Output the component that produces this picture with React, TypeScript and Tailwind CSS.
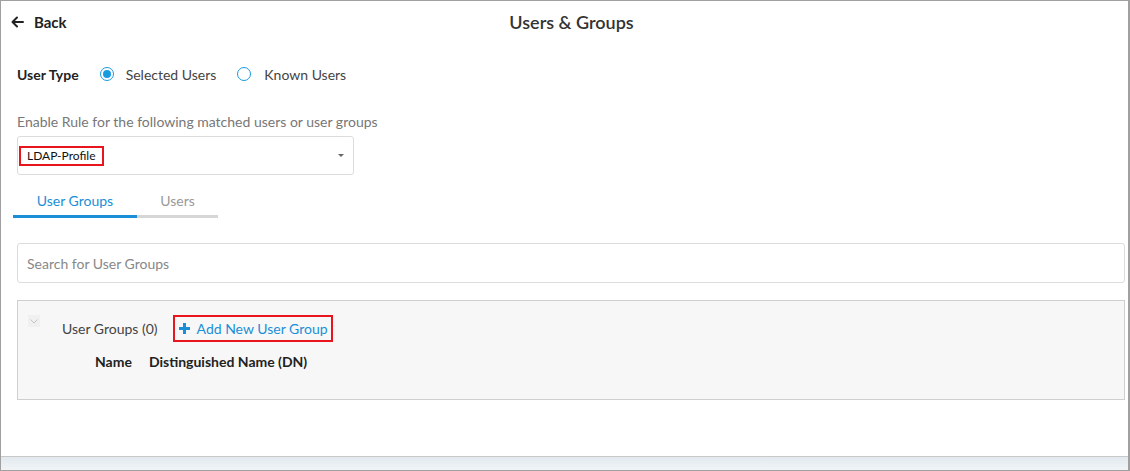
export default function App() {
  return (
    <div
      className="w-[1130px] h-[471px] bg-white border border-[#a0a0a0] border-r-2 flex flex-col text-[#333] overflow-hidden"
      style={{ fontFamily: 'Lato, "Open Sans", sans-serif' }}
    >
      {/* Header */}
      <div className="relative h-[42px] flex items-center">
        <button className="flex items-center gap-[10px] pl-[10px] text-[15px] font-bold text-[#222]">
          <svg width="13" height="12" viewBox="0 0 13 12" fill="none" stroke="#222" strokeWidth="2" strokeLinecap="round" strokeLinejoin="round">
            <path d="M12 6H2M6 1.5L1.5 6L6 10.5" />
          </svg>
          Back
        </button>
        <h1 className="absolute left-0 right-0 pl-[14px] text-center text-[18px] font-semibold text-[#333] pointer-events-none">
          Users &amp; Groups
        </h1>
      </div>

      <div className="flex-1 pl-4 pr-[3px]">
        {/* User Type */}
        <div className="flex items-center h-[20px] mt-[21px] text-[14px]">
          <span className="font-bold text-[14px] text-[#222] mr-[21px]">User Type</span>
          <label className="flex items-center">
            <span className="w-[14px] h-[14px] rounded-full border border-[#1a9be0] flex items-center justify-center">
              <span className="w-[8px] h-[8px] rounded-full bg-[#1a9be0]" />
            </span>
            <span className="ml-[12px] text-[#444]">Selected Users</span>
          </label>
          <label className="flex items-center ml-[21px]">
            <span className="w-[14px] h-[14px] rounded-full border border-[#1a9be0]" />
            <span className="ml-[13px] text-[#444]">Known Users</span>
          </label>
        </div>

        {/* Rule select */}
        <p className="mt-[29px] text-[14px] text-[#777] leading-[18px]">
          Enable Rule for the following matched users or user groups
        </p>
        <div className="mt-[5px] w-[337px] h-[39px] border border-[#dcdcdc] rounded-[3px] flex items-center justify-between pr-[9px]">
          <span className="ml-[1px] border-2 border-[#e8141e] h-[20px] px-[6px] flex items-center text-[12px] text-[#111]">
            LDAP-Profile
          </span>
          <span className="w-0 h-0 border-l-[3px] border-r-[3px] border-t-[3px] border-l-transparent border-r-transparent border-t-[#666]" />
        </div>

        {/* Tabs */}
        <div className="flex mt-[10px] -ml-[4px] text-[14px]">
          <div className="w-[124px] h-[33px] flex items-center justify-center text-[#1a8fd8] border-b-[3px] border-[#1a8fd8]">
            User Groups
          </div>
          <div className="w-[81px] h-[33px] flex items-center justify-center text-[#999] border-b-[3px] border-[#d6d6d6]">
            Users
          </div>
        </div>

        {/* Search */}
        <div className="mt-[25px] h-[40px] border border-[#dcdcdc] rounded-[3px] flex items-center px-[9px] text-[14px] text-[#888]">
          Search for User Groups
        </div>

        {/* Panel */}
        <div className="mt-[17px] h-[100px] border border-[#cfcfcf] bg-[#f7f7f7]">
          <div className="flex items-center h-[26px] mt-[14px]">
            <span className="ml-[10px] -mt-[14px] w-[12px] h-[12px] bg-[#f0f0f0] flex items-center justify-center">
              <svg width="8" height="5" viewBox="0 0 8 5" fill="none" stroke="#c4c4c4" strokeWidth="1">
                <path d="M0.5 0.5L4 4L7.5 0.5" />
              </svg>
            </span>
            <span className="ml-[22px] text-[14px] text-[#444]">User Groups (0)</span>
            <span className="ml-[15px] h-[27px] border-2 border-[#e8141e] flex items-center pl-[4px] pr-[3px] text-[14px] text-[#1a8fd8]">
              <svg width="11" height="11" viewBox="0 0 11 11" className="mr-[7px]">
                <rect x="4" y="0" width="3" height="11" fill="#1a8fd8" />
                <rect x="0" y="4" width="11" height="3" fill="#1a8fd8" />
              </svg>
              Add New User Group
            </span>
          </div>
          <div className="flex mt-[10px] ml-[77px] text-[14px] font-bold text-[#222] gap-[17px]">
            <span>Name</span>
            <span>Distinguished Name (DN)</span>
          </div>
        </div>
      </div>

      {/* Footer strip */}
      <div className="h-[14px] border-t border-[#c8c8c8] bg-gradient-to-b from-[#e2e9ee] to-[#f0f4f7]" />
    </div>
  )
}
